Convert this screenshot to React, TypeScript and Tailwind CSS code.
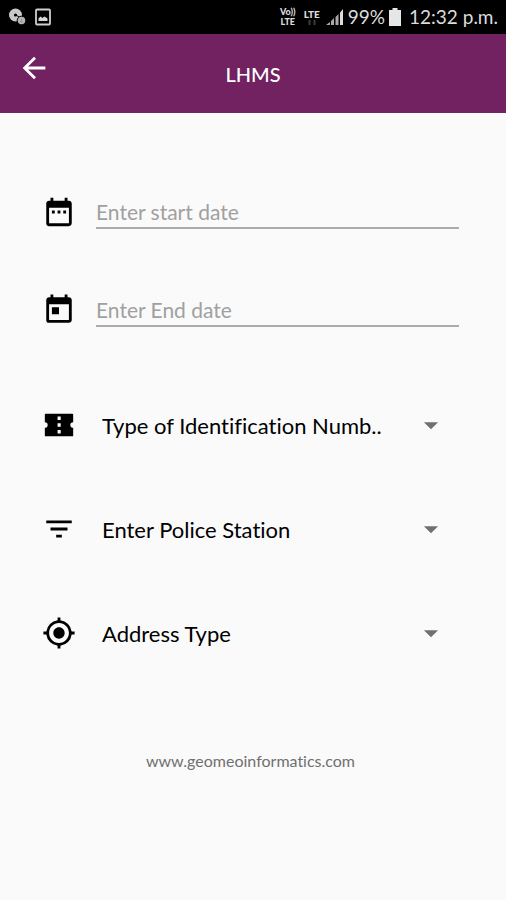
import { useState } from "react";
import type { ComponentType } from "react";
import { MdArrowBack, MdArrowDropDown, MdDateRange, MdFilterList, MdGpsFixed, MdToday } from "react-icons/md";

type FieldProps = {
  id: string;
  label: string;
  icon: ComponentType<{ size?: number }>;
};

function TicketIcon({ size = 24 }: { size?: number }) {
  return (
    <svg viewBox="0 0 24 24" width={size} height={size} fill="currentColor" aria-hidden="true">
      <path
        fillRule="evenodd"
        d="M2.500 4h19q.5 0 .5.500V10a2 2 0 0 0 0 4v5.500q0 .5-.5.500h-19q-.5 0-.5-.5V14a2 2 0 0 0 0-4V4.500q0-.5.500-.5zM11 6v2.500h2.200V6zM11 10.800v2.400h2.200v-2.400zM11 15.500V18h2.200v-2.500z"
      />
    </svg>
  );
}

function StatusBar() {
  return (
    <div className="flex h-[34px] items-center justify-between bg-black px-2 text-[#dcdcdc]">
      <div className="flex items-center gap-2">
        <svg viewBox="0 0 18 18" className="h-[18px] w-[18px]" aria-hidden="true">
          <circle cx="7.5" cy="7" r="6.5" fill="#c9c9c9" />
          <circle cx="7.5" cy="7" r="1.6" fill="#000" />
          <path d="M8 7l6 4" stroke="#000" strokeWidth="1" />
          <circle cx="13.5" cy="12.5" r="4.3" fill="#b5b5b5" stroke="#000" strokeWidth="1" />
          <path d="M13.5 10.5v4M12 13l1.500 1.500 1.500-1.500" stroke="#999" fill="none" />
        </svg>
        <svg viewBox="0 0 18 18" className="h-[18px] w-[18px]" aria-hidden="true">
          <rect x="2" y="1.500" width="14" height="15" rx="1" fill="none" stroke="#cfcfcf" strokeWidth="1.800" />
          <path d="M4.500 13v-2.500l2-2 2 1.500 2-1.500 3 2V13z" fill="#d6d6d6" />
        </svg>
      </div>
      <div className="flex items-center gap-1">
        <div className="flex w-5 flex-col items-center text-[9px] font-black leading-[10px]">
          <span>Vo))</span>
          <span>LTE</span>
        </div>
        <div className="flex w-5 flex-col items-center text-[10px] font-black leading-[12px]">
          <span>LTE</span>
          <svg viewBox="0 0 10 7" className="h-[7px] w-[10px]" aria-hidden="true">
            <path d="M2.500 0v5M7.500 0v5" stroke="#3c3c3c" strokeWidth="2" fill="none" />
          </svg>
        </div>
        <svg viewBox="0 0 18 18" className="h-[18px] w-[18px]" aria-hidden="true">
          <path d="M0 17l4-3v3zM5 13l3-3v7H5zM9.500 9l3-3v11h-3z" fill="#a9a9a9" />
          <path d="M14 4.500L17 1v16h-3z" fill="#dcdcdc" />
        </svg>
        <span className="text-[19px] leading-6">99%</span>
        <svg viewBox="0 0 12 18" className="h-[18px] w-3" aria-hidden="true">
          <path d="M3.500 0h5v2H12v16H0V2h3.500z" fill="#e6e6e6" />
        </svg>
        <span className="ml-1 text-[19px] leading-6">12:32 p.m.</span>
      </div>
    </div>
  );
}

function DateField({ id, label, icon: Icon }: FieldProps) {
  const [value, setValue] = useState("");

  return (
    <div className="flex h-[34px] items-center gap-5">
      <label htmlFor={id} aria-label={label} className="shrink-0">
        <Icon size={34} />
      </label>
      <input
        id={id}
        type="text"
        value={value}
        placeholder={label}
        onChange={(e) => setValue(e.target.value)}
        className="h-full min-w-0 flex-1 border-b-2 border-[#ababab] bg-transparent text-[21px] text-black outline-none placeholder:text-[#a0a0a0]"
      />
    </div>
  );
}

function SelectField({ id, label, icon: Icon }: FieldProps) {
  return (
    <div className="flex h-10 items-center gap-[26px]">
      <label htmlFor={id} aria-label={label} className="shrink-0">
        <Icon size={34} />
      </label>
      <div className="relative min-w-0 flex-1">
        <select
          id={id}
          className="h-10 w-full appearance-none bg-transparent pr-14 text-[22px] text-black outline-none"
        >
          <option>{label}</option>
        </select>
        <MdArrowDropDown
          size={34}
          aria-hidden="true"
          className="pointer-events-none absolute right-[11px] top-[3px] text-[#707070]"
        />
      </div>
    </div>
  );
}

export default function App() {
  return (
    <div className="min-h-screen bg-[#fafafa] font-['Lato',sans-serif] text-black [font-variant-ligatures:none]">
      <StatusBar />

      <header className="grid h-[79px] grid-cols-[1fr_auto_1fr] items-center bg-[#722161] px-[17px] text-white">
        <button type="button" aria-label="Back" className="mb-3 w-fit">
          <MdArrowBack size={34} />
        </button>
        <h1 className="text-[20px] font-medium">LHMS</h1>
      </header>

      <main className="pb-8 pl-[42px] pr-[47px] pt-[82px]">
        <form className="flex flex-col gap-16">
          <DateField id="start-date" label="Enter start date" icon={MdDateRange} />
          <DateField id="end-date" label="Enter End date" icon={MdToday} />
          <div className="mt-[14px] flex flex-col gap-16">
            <SelectField id="id-type" label="Type of Identification Numb.." icon={TicketIcon} />
            <SelectField id="police-station" label="Enter Police Station" icon={MdFilterList} />
            <SelectField id="address-type" label="Address Type" icon={MdGpsFixed} />
          </div>
        </form>
        <footer className="mt-24 text-center text-[16px] leading-6 text-[#707070]">www.geomeoinformatics.com</footer>
      </main>
    </div>
  );
}
